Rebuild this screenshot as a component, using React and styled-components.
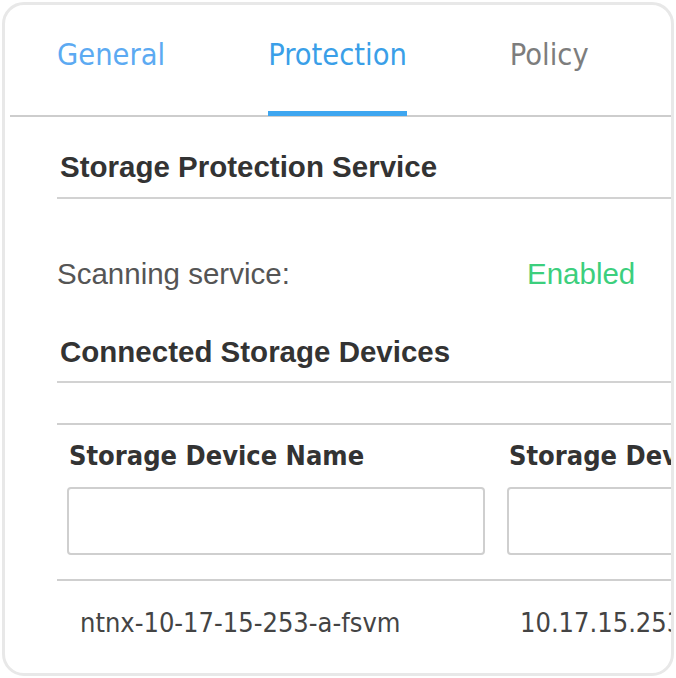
import React, { useState } from 'react';
import styled, { createGlobalStyle } from 'styled-components';

const GlobalStyle = createGlobalStyle`
  html, body {
    margin: 0;
    padding: 0;
    background: #fff;
  }
  * {
    box-sizing: border-box;
  }
`;

const tabs = ['General', 'Protection', 'Policy'];

const devices = [{ name: 'ntnx-10-17-15-253-a-fsvm', address: '10.17.15.253' }];

const App = () => {
  const [active, setActive] = useState('Protection');
  const [filters, setFilters] = useState({ name: '', address: '' });

  const onChangeHandler = (event) => {
    const { name, value } = event.target;
    setFilters({ ...filters, [name]: value });
  };

  return (
    <>
      <GlobalStyle />
      <StCard>
        <StTabBar>
          {tabs.map((tab, i) => (
            <StTab key={tab} $active={active === tab} $first={i === 0} onClick={() => setActive(tab)}>
              {tab}
            </StTab>
          ))}
        </StTabBar>

        <StContent>
          <StSectionTitle>Storage Protection Service</StSectionTitle>
          <StInfoRow>
            <StInfoLabel>Scanning service:</StInfoLabel>
            <StInfoValue>Enabled</StInfoValue>
          </StInfoRow>

          <StSectionTitle $compact>Connected Storage Devices</StSectionTitle>

          <StTable>
            <StHeadRow>
              <StHeadCell>
                <StHeadLabel>Storage Device Name</StHeadLabel>
                <StFilterInput type="text" name="name" value={filters.name} onChange={onChangeHandler} />
              </StHeadCell>
              <StHeadCell>
                <StHeadLabel>Storage Device Address</StHeadLabel>
                <StFilterInput type="text" name="address" value={filters.address} onChange={onChangeHandler} />
              </StHeadCell>
            </StHeadRow>
            {devices.map((d) => (
              <StBodyRow key={d.name}>
                <StCell>{d.name}</StCell>
                <StCell>{d.address}</StCell>
              </StBodyRow>
            ))}
          </StTable>
        </StContent>
      </StCard>
    </>
  );
};

export default App;

const StCard = styled.div`
  margin: 2px;
  width: 672px;
  height: 674px;
  border: 3px solid #e8e8e8;
  border-radius: 22px;
  overflow: hidden;
  background: #fff;
`;

const StTabBar = styled.div`
  display: flex;
  gap: 103px;
  margin-left: 5px;
  padding-left: 47px;
  border-bottom: 2px solid #cdcdcd;
  white-space: nowrap;
`;

const StTab = styled.div`
  padding: 32px 0 38px;
  line-height: 36px;
  font-family: 'DejaVu Sans Condensed', 'DejaVu Sans', sans-serif;
  font-stretch: condensed;
  font-size: 30.5px;
  color: ${({ $active, $first }) => ($active ? '#3a9fe8' : $first ? '#5caaf2' : '#7d7d7d')};
  border-bottom: 5px solid ${({ $active }) => ($active ? '#3ea6f0' : 'transparent')};
  margin-bottom: -1px;
  cursor: pointer;
`;

const StContent = styled.div`
  padding-left: 52px;
  white-space: nowrap;
`;

const StSectionTitle = styled.div`
  margin-top: ${({ $compact }) => ($compact ? '42px' : '32px')};
  padding: 0 0 ${({ $compact }) => ($compact ? '11px' : '12px')} 3px;
  border-bottom: 2px solid #d2d2d2;
  font-family: 'Liberation Sans', Arial, sans-serif;
  font-weight: 700;
  font-size: 29.5px;
  line-height: 36px;
  color: #333;
`;

const StInfoRow = styled.div`
  display: grid;
  grid-template-columns: 470px auto;
  margin-top: 57px;
  font-family: 'Liberation Sans', Arial, sans-serif;
  font-size: 29.5px;
  line-height: 36px;
`;

const StInfoLabel = styled.span`
  color: #555;
`;

const StInfoValue = styled.span`
  color: #3ccf7d;
`;

const StTable = styled.div`
  margin-top: 40px;
  border-top: 2px solid #cfcfcf;
  font-family: 'DejaVu Sans Condensed', 'DejaVu Sans', sans-serif;
  font-stretch: condensed;
`;

const StHeadRow = styled.div`
  display: grid;
  grid-template-columns: 440px 440px;
`;

const StHeadCell = styled.div`
  padding: 13px 12px 24px 10px;
`;

const StHeadLabel = styled.div`
  padding-left: 2px;
  font-weight: 700;
  font-size: 27px;
  line-height: 36px;
  color: #333;
  overflow: hidden;
`;

const StFilterInput = styled.input`
  display: block;
  margin-top: 13px;
  width: 100%;
  height: 68px;
  border: 2px solid #cfcfcf;
  border-radius: 4px;
  background: #fff;
  outline: none;
  font-size: 22px;
  padding: 0 12px;
`;

const StBodyRow = styled.div`
  display: grid;
  grid-template-columns: 440px 440px;
  border-top: 2px solid #cfcfcf;
`;

const StCell = styled.div`
  padding: 24px 0 0 23px;
  font-size: 27px;
  line-height: 36px;
  color: #444;
`;
